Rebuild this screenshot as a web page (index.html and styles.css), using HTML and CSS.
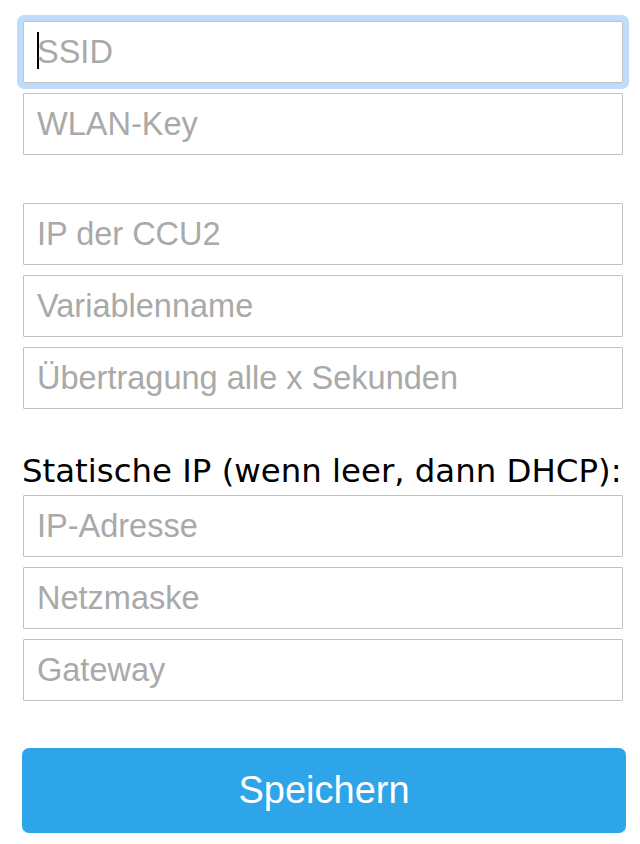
FILE: index.html
```html
<!DOCTYPE html>
<html lang="de">
<head>
<meta charset="utf-8">
<title>WLAN Konfiguration</title>
<link rel="stylesheet" href="styles.css">
</head>
<body>
<form class="form">
  <div class="group">
    <input class="field field--focus" type="text" placeholder="SSID">
    <input class="field" type="password" placeholder="WLAN-Key">
  </div>
  <div class="group group--ccu">
    <input class="field" type="text" placeholder="IP der CCU2">
    <input class="field" type="text" placeholder="Variablenname">
    <input class="field" type="text" placeholder="Übertragung alle x Sekunden">
  </div>
  <div class="group group--static">
    <label class="label">Statische IP (wenn leer, dann DHCP):</label>
    <input class="field" type="text" placeholder="IP-Adresse">
    <input class="field" type="text" placeholder="Netzmaske">
    <input class="field" type="text" placeholder="Gateway">
  </div>
  <button class="save" type="button">Speichern</button>
</form>
</body>
</html>
```
FILE: styles.css
```css
html, body {
  margin: 0;
  padding: 0;
  background: #ffffff;
}

.form {
  display: flex;
  flex-direction: column;
  width: 600px;
  padding: 21px 0 0 23px;
}

.group {
  display: flex;
  flex-direction: column;
  gap: 10px;
}

.group--ccu {
  margin-top: 48px;
}

.group--static {
  margin-top: 42px;
}

.label {
  font-family: "DejaVu Sans", Verdana, sans-serif;
  font-size: 32.4px;
  line-height: 40px;
  color: #000000;
  margin-left: -1px;
  margin-bottom: -6px;
  white-space: nowrap;
}

.field {
  box-sizing: border-box;
  width: 600px;
  height: 62px;
  margin: 0;
  padding: 0 13px;
  border: 1px solid #c2c2c2;
  border-radius: 1px;
  background: #ffffff;
  font-family: "Liberation Sans", Arial, sans-serif;
  font-size: 32.5px;
  color: #333333;
  outline: none;
}

.field::placeholder {
  color: #a9a9a9;
  opacity: 1;
}

.field--focus {
  outline: 6px solid #bfdcf9;
  outline-offset: 0;
  background-image: linear-gradient(#000000, #000000);
  background-repeat: no-repeat;
  background-position: 13px 10px;
  background-size: 2px 37px;
}

.save {
  margin: 47px 0 0 -1px;
  width: 604px;
  height: 85px;
  border: none;
  border-radius: 7px;
  background: #2ea4e9;
  color: #ffffff;
  font-family: "Liberation Sans", Arial, sans-serif;
  font-size: 38px;
  padding: 0;
  cursor: pointer;
}
```
